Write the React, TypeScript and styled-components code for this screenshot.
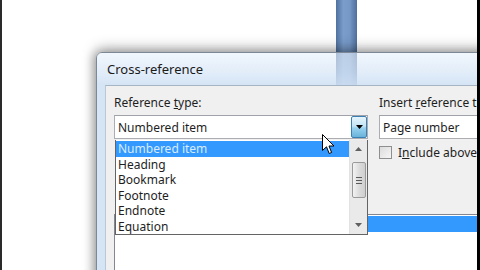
import React from "react";
import styled, { createGlobalStyle } from "styled-components";

const GlobalStyle = createGlobalStyle`
  html, body {
    margin: 0;
    padding: 0;
    background: #ffffff;
  }
  body {
    font-family: "Noto Sans", "Open Sans", "Liberation Sans", sans-serif;
    font-size: 12px;
    color: #1e1e1e;
  }
`;

const Screen = styled.div`
  position: relative;
  width: 480px;
  height: 270px;
  overflow: hidden;
  background: #ffffff;
  box-sizing: border-box;
  border-left: 2px solid #2a2a2a;
  border-right: 3px solid #000000;
`;

const BlueBar = styled.div`
  position: absolute;
  left: 334px;
  top: 0;
  width: 21px;
  height: 86px;
  background: linear-gradient(
    to right,
    #50719f 0%,
    #7a9dcb 35%,
    #7598c7 65%,
    #4f6e9b 100%
  );
`;

const Dialog = styled.div`
  position: absolute;
  left: 94px;
  top: 52px;
  width: 400px;
  height: 240px;
  display: flex;
  flex-direction: column;
  border: 1px solid #7d8896;
  border-radius: 6px 6px 0 0;
  box-shadow: 0 -3px 14px rgba(0, 0, 0, 0.35), -3px 0 10px rgba(0, 0, 0, 0.2);
`;

const TitleBar = styled.div`
  height: 32px;
  display: flex;
  align-items: center;
  padding-left: 10px;
  border-radius: 5px 5px 0 0;
  background: linear-gradient(
    to bottom,
    rgba(232, 241, 251, 0.6) 0%,
    rgba(216, 231, 247, 0.75) 60%,
    rgba(208, 225, 244, 0.9) 100%
  );
  font-size: 13px;
  color: #1b1b1b;
`;

const Body = styled.div`
  flex: 1;
  display: flex;
  padding-left: 8px;
  background: linear-gradient(to right, #d6e5f5, #c9dcf1);
`;

const Client = styled.div`
  flex: 1;
  display: flex;
  flex-direction: column;
  padding: 9px 0 0 8px;
  background: #f0f0f0;
  border-top: 1px solid #a7b4c4;
  border-left: 1px solid #b9c7d8;
`;

const TopRow = styled.div`
  display: flex;
  align-items: flex-start;
`;

const Column = styled.div<{ $width?: number; $offset?: number }>`
  display: flex;
  flex-direction: column;
  width: ${({ $width }) => ($width ? `${$width}px` : "auto")};
  margin-left: ${({ $offset }) => $offset ?? 0}px;
  flex-shrink: 0;
`;

const Label = styled.div`
  height: 16px;
  line-height: 16px;
  margin-bottom: 4px;
  white-space: nowrap;
  color: #1e1e1e;
`;

const ComboWrap = styled.div`
  position: relative;
`;

const Combo = styled.div<{ $width?: number }>`
  height: 24px;
  width: ${({ $width }) => ($width ? `${$width}px` : "auto")};
  box-sizing: border-box;
  display: flex;
  align-items: center;
  border: 1px solid #abadb3;
  border-top-color: #9fa2a8;
  background: #ffffff;
  padding-left: 3px;
  white-space: nowrap;
`;

const ComboText = styled.span`
  flex: 1;
`;

const DropButton = styled.div`
  width: 16px;
  height: 22px;
  box-sizing: border-box;
  display: flex;
  align-items: center;
  justify-content: center;
  border: 1px solid #3c7fb1;
  border-radius: 2px;
  background: linear-gradient(to bottom, #e5f4fc 0%, #c4e5f6 45%, #98d1ef 55%, #68b3db 100%);
`;

const DropList = styled.div`
  position: absolute;
  left: 1px;
  top: 25px;
  width: 253px;
  height: 95px;
  box-sizing: border-box;
  display: flex;
  background: #ffffff;
  border: 1px solid #646464;
  border-top: none;
  z-index: 2;
`;

const Items = styled.div`
  flex: 1;
  display: flex;
  flex-direction: column;
  padding-top: 1px;
`;

const Item = styled.div<{ $selected?: boolean }>`
  height: 15.5px;
  line-height: 15.5px;
  padding-left: 2px;
  background: ${({ $selected }) => ($selected ? "#3399ff" : "transparent")};
  color: ${({ $selected }) => ($selected ? "#d8ecff" : "#1e1e1e")};
`;

const ScrollBar = styled.div`
  width: 17px;
  display: flex;
  flex-direction: column;
  align-items: center;
  background: #eaeaea;
  border-left: 1px solid #e2e2e2;
`;

const ScrollArrow = styled.div`
  height: 18px;
  width: 100%;
  display: flex;
  align-items: center;
  justify-content: center;
`;

const Thumb = styled.div`
  margin-top: 4px;
  width: 14px;
  height: 36px;
  box-sizing: border-box;
  border: 1px solid #9a9a9a;
  border-radius: 2px;
  background: linear-gradient(to right, #f3f3f3, #dcdcdc 50%, #cfcfcf);
  display: flex;
  flex-direction: column;
  align-items: center;
  justify-content: center;
  gap: 2px;
`;

const Grip = styled.div`
  width: 6px;
  height: 1px;
  background: #5a5a5a;
`;

const Spacer = styled.div`
  flex: 1;
`;

const CheckRow = styled.div`
  display: flex;
  align-items: center;
  gap: 6px;
  margin-top: 5px;
  white-space: nowrap;
`;

const CheckBox = styled.div`
  width: 13px;
  height: 13px;
  box-sizing: border-box;
  border: 1px solid #8e8f8f;
  background: linear-gradient(135deg, #dcdcdc, #f6f6f6);
`;

const ListBox = styled.div`
  margin-top: 53px;
  height: 60px;
  background: #ffffff;
  border: 1px solid #828790;
  border-right: none;
  padding-top: 1px;
`;

const ListRow = styled.div<{ $selected?: boolean }>`
  height: 16px;
  background: ${({ $selected }) => ($selected ? "#3399ff" : "transparent")};
`;

const Cursor = styled.svg`
  position: absolute;
  left: 320px;
  top: 134px;
  z-index: 5;
`;

const items = ["Numbered item", "Heading", "Bookmark", "Footnote", "Endnote", "Equation"];

export default function App() {
  return (
    <>
      <GlobalStyle />
      <Screen>
        <BlueBar />
        <Dialog>
          <TitleBar>Cross-reference</TitleBar>
          <Body>
            <Client>
              <TopRow>
                <Column $width={254}>
                  <Label>
                    Reference <u>t</u>ype:
                  </Label>
                  <ComboWrap>
                    <Combo $width={254}>
                      <ComboText>Numbered item</ComboText>
                      <DropButton>
                        <svg width="7" height="4" viewBox="0 0 7 4">
                          <path d="M0 0h7L3.5 4z" fill="#000" />
                        </svg>
                      </DropButton>
                    </Combo>
                    <DropList>
                      <Items>
                        {items.map((it, i) => (
                          <Item key={it} $selected={i === 0}>
                            {it}
                          </Item>
                        ))}
                      </Items>
                      <ScrollBar>
                        <ScrollArrow>
                          <svg width="7" height="4" viewBox="0 0 7 4">
                            <path d="M0 4h7L3.5 0z" fill="#606060" />
                          </svg>
                        </ScrollArrow>
                        <Thumb>
                          <Grip />
                          <Grip />
                          <Grip />
                        </Thumb>
                        <Spacer />
                        <ScrollArrow>
                          <svg width="7" height="4" viewBox="0 0 7 4">
                            <path d="M0 0h7L3.5 4z" fill="#606060" />
                          </svg>
                        </ScrollArrow>
                      </ScrollBar>
                    </DropList>
                  </ComboWrap>
                </Column>
                <Column $offset={11}>
                  <Label>
                    Insert <u>r</u>eference to:
                  </Label>
                  <Combo $width={160}>
                    <ComboText>Page number</ComboText>
                  </Combo>
                  <CheckRow>
                    <CheckBox />
                    <span>
                      I<u>n</u>clude above/below
                    </span>
                  </CheckRow>
                </Column>
              </TopRow>
              <ListBox>
                <ListRow $selected />
                <ListRow />
              </ListBox>
            </Client>
          </Body>
        </Dialog>
        <Cursor width="13" height="21" viewBox="0 0 13 21">
          <path
            d="M0.5 0.5 L0.5 16.5 L4.5 12.8 L7.2 19.5 L9.6 18.5 L7 12 L12 12 Z"
            fill="#ffffff"
            stroke="#000000"
            strokeWidth="1"
            strokeLinejoin="round"
          />
        </Cursor>
      </Screen>
    </>
  );
}
